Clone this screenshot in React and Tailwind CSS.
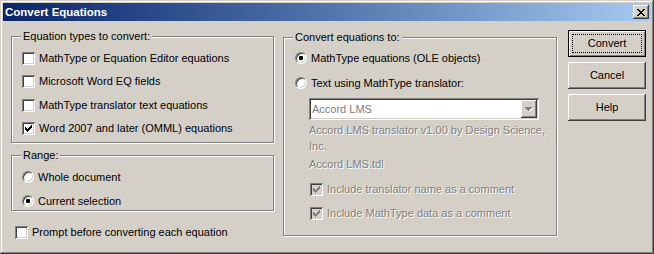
import React from 'react';

const raised = 'shadow-[inset_-1px_-1px_0_#404040,inset_1px_1px_0_#ffffff,inset_-2px_-2px_0_#808080,inset_2px_2px_0_#d4d0c8]';
const sunken = 'shadow-[inset_1px_1px_0_#808080,inset_-1px_-1px_0_#ffffff,inset_2px_2px_0_#404040,inset_-2px_-2px_0_#d4d0c8]';
const grayText = 'text-[#808080] [text-shadow:1px_1px_0_#ffffff]';

function CheckMark({ color }) {
  // classic 7x7 tick, one 3px column at a time
  return (
    <svg width="7" height="7" viewBox="0 0 7 7" shapeRendering="crispEdges" className="block">
      {[2, 3, 4, 3, 2, 1, 0].map((y, x) => (
        <rect key={x} x={x} y={y} width="1" height="3" fill={color} />
      ))}
    </svg>
  );
}

function Checkbox({ checked, disabled, label, className = '' }) {
  return (
    <div className={`flex items-center gap-[4px] h-[13px] ${className}`}>
      <div
        className={`w-[13px] h-[13px] shrink-0 flex items-center justify-center ${sunken} ${
          disabled ? 'bg-[#d4d0c8]' : 'bg-white'
        }`}
      >
        {checked && <CheckMark color={disabled ? '#808080' : '#000000'} />}
      </div>
      <span className={`leading-[13px] whitespace-nowrap ${disabled ? grayText : ''}`}>{label}</span>
    </div>
  );
}

function Radio({ checked, label, className = '' }) {
  return (
    <div className={`flex items-center gap-[4px] h-[12px] ${className}`}>
      <div className="w-[12px] h-[12px] shrink-0 rounded-full bg-white border border-t-[#808080] border-l-[#808080] border-r-white border-b-white shadow-[inset_1px_1px_0_#404040,inset_-1px_-1px_0_#d4d0c8] flex items-center justify-center">
        {checked && <div className="w-[4px] h-[4px] rounded-[1px] bg-black" />}
      </div>
      <span className="leading-[13px] whitespace-nowrap">{label}</span>
    </div>
  );
}

function Group({ title, className = '', children }) {
  return (
    <fieldset
      className={`border border-[#808080] shadow-[1px_1px_0_#ffffff,inset_1px_1px_0_#ffffff] ${className}`}
    >
      <legend className="ml-[9px] px-[2px] leading-[13px] bg-[#d4d0c8]">{title}</legend>
      {children}
    </fieldset>
  );
}

function Button({ children, isDefault }) {
  if (isDefault) {
    return (
      <button className="w-[78px] h-[27px] border border-black bg-[#d4d0c8] shadow-[inset_1px_1px_0_#ffffff,inset_-1px_-1px_0_#808080] p-[3px]">
        <div className="w-full h-full border border-dotted border-black flex items-center justify-center leading-[13px]">
          {children}
        </div>
      </button>
    );
  }
  return (
    <button className={`w-[78px] h-[27px] bg-[#d4d0c8] ${raised} flex items-center justify-center leading-[13px]`}>
      {children}
    </button>
  );
}

export default function App() {
  return (
    <div className="w-[654px] h-[254px] bg-[#d4d0c8] p-[3px] shadow-[inset_-1px_-1px_0_#404040,inset_1px_1px_0_#d4d0c8,inset_-2px_-2px_0_#808080,inset_2px_2px_0_#ffffff] font-['Liberation_Sans',Arial,sans-serif] text-[11px] text-black overflow-hidden">
      {/* Title bar */}
      <div className="h-[18px] bg-linear-to-r from-[#0a246a] to-[#a6caf0] flex items-center pl-[2px] pr-[2px]">
        <span className="font-bold text-white text-[11.5px] leading-[13px]">Convert Equations</span>
        <div className={`ml-auto w-[16px] h-[14px] bg-[#d4d0c8] ${raised} flex items-center justify-center`}>
          <svg width="8" height="7" viewBox="0 0 8 7" shapeRendering="crispEdges" className="block">
            {[
              [0, 6], [1, 5], [2, 4], [3, 3], [2, 4], [1, 5], [0, 6],
            ].map(([a, b], y) => (
              <g key={y}>
                <rect x={a} y={y} width="2" height="1" fill="#000" />
                <rect x={b} y={y} width="2" height="1" fill="#000" />
              </g>
            ))}
          </svg>
        </div>
      </div>

      {/* Body */}
      <div className="flex items-start pl-[8px] pt-[9px]">
        {/* Left column */}
        <div className="w-[263px] flex flex-col">
          <Group title="Equation types to convert:" className="h-[113px]">
            <div className="flex flex-col pl-[10px] pt-[9px]">
              <Checkbox label="MathType or Equation Editor equations" />
              <Checkbox label="Microsoft Word EQ fields" className="mt-[10px]" />
              <Checkbox label="MathType translator text equations" className="mt-[11px]" />
              <Checkbox checked label="Word 2007 and later (OMML) equations" className="mt-[10px]" />
            </div>
          </Group>

          <Group title="Range:" className="h-[62px] mt-[6px]">
            <div className="flex flex-col pl-[10px] pt-[9px]">
              <Radio label="Whole document" />
              <Radio checked label="Current selection" className="mt-[12px]" />
            </div>
          </Group>

          <Checkbox label="Prompt before converting each equation" className="mt-[15px] ml-[4px] gap-[3px]" />
        </div>

        {/* Right group */}
        <Group title="Convert equations to:" className="w-[274px] h-[205px] ml-[9px] mt-[1px]">
          <div className="flex flex-col pl-[11px] pt-[8px]">
            <Radio checked label="MathType equations (OLE objects)" />
            <Radio label="Text using MathType translator:" className="mt-[13px]" />

            <div className={`ml-[14px] mt-[9px] w-[230px] h-[22px] bg-white ${sunken} p-[2px] flex`}>
              <span className="flex-1 pl-[1px] flex items-center text-[#808080] leading-[13px]">Accord LMS</span>
              <div className={`w-[16px] h-full bg-[#d4d0c8] ${raised} flex items-center justify-center`}>
                <svg width="8" height="5" viewBox="0 0 8 5" shapeRendering="crispEdges" className="block">
                  <path d="M1 1h7v1h-1v1h-1v1h-1v1h-1v-1h-1v-1h-1v-1h-1z" fill="#ffffff" />
                  <path d="M0 0h7v1h-1v1h-1v1h-1v1h-1v-1h-1v-1h-1v-1h-1z" fill="#808080" />
                </svg>
              </div>
            </div>

            <div className={`ml-[14px] mt-[2px] leading-[16px] ${grayText}`}>
              Accord LMS translator v1.00 by Design Science,
              <br />
              Inc.
            </div>
            <div className={`ml-[14px] mt-[2px] leading-[16px] ${grayText}`}>Accord LMS.tdl</div>

            <Checkbox disabled checked label="Include translator name as a comment" className="ml-[15px] mt-[11px] gap-[3px]" />
            <Checkbox disabled checked label="Include MathType data as a comment" className="ml-[15px] mt-[11px] gap-[3px]" />
          </div>
        </Group>

        {/* Buttons */}
        <div className="ml-[11px] flex flex-col gap-[5px]">
          <Button isDefault>Convert</Button>
          <Button>Cancel</Button>
          <Button>Help</Button>
        </div>
      </div>
    </div>
  );
}
